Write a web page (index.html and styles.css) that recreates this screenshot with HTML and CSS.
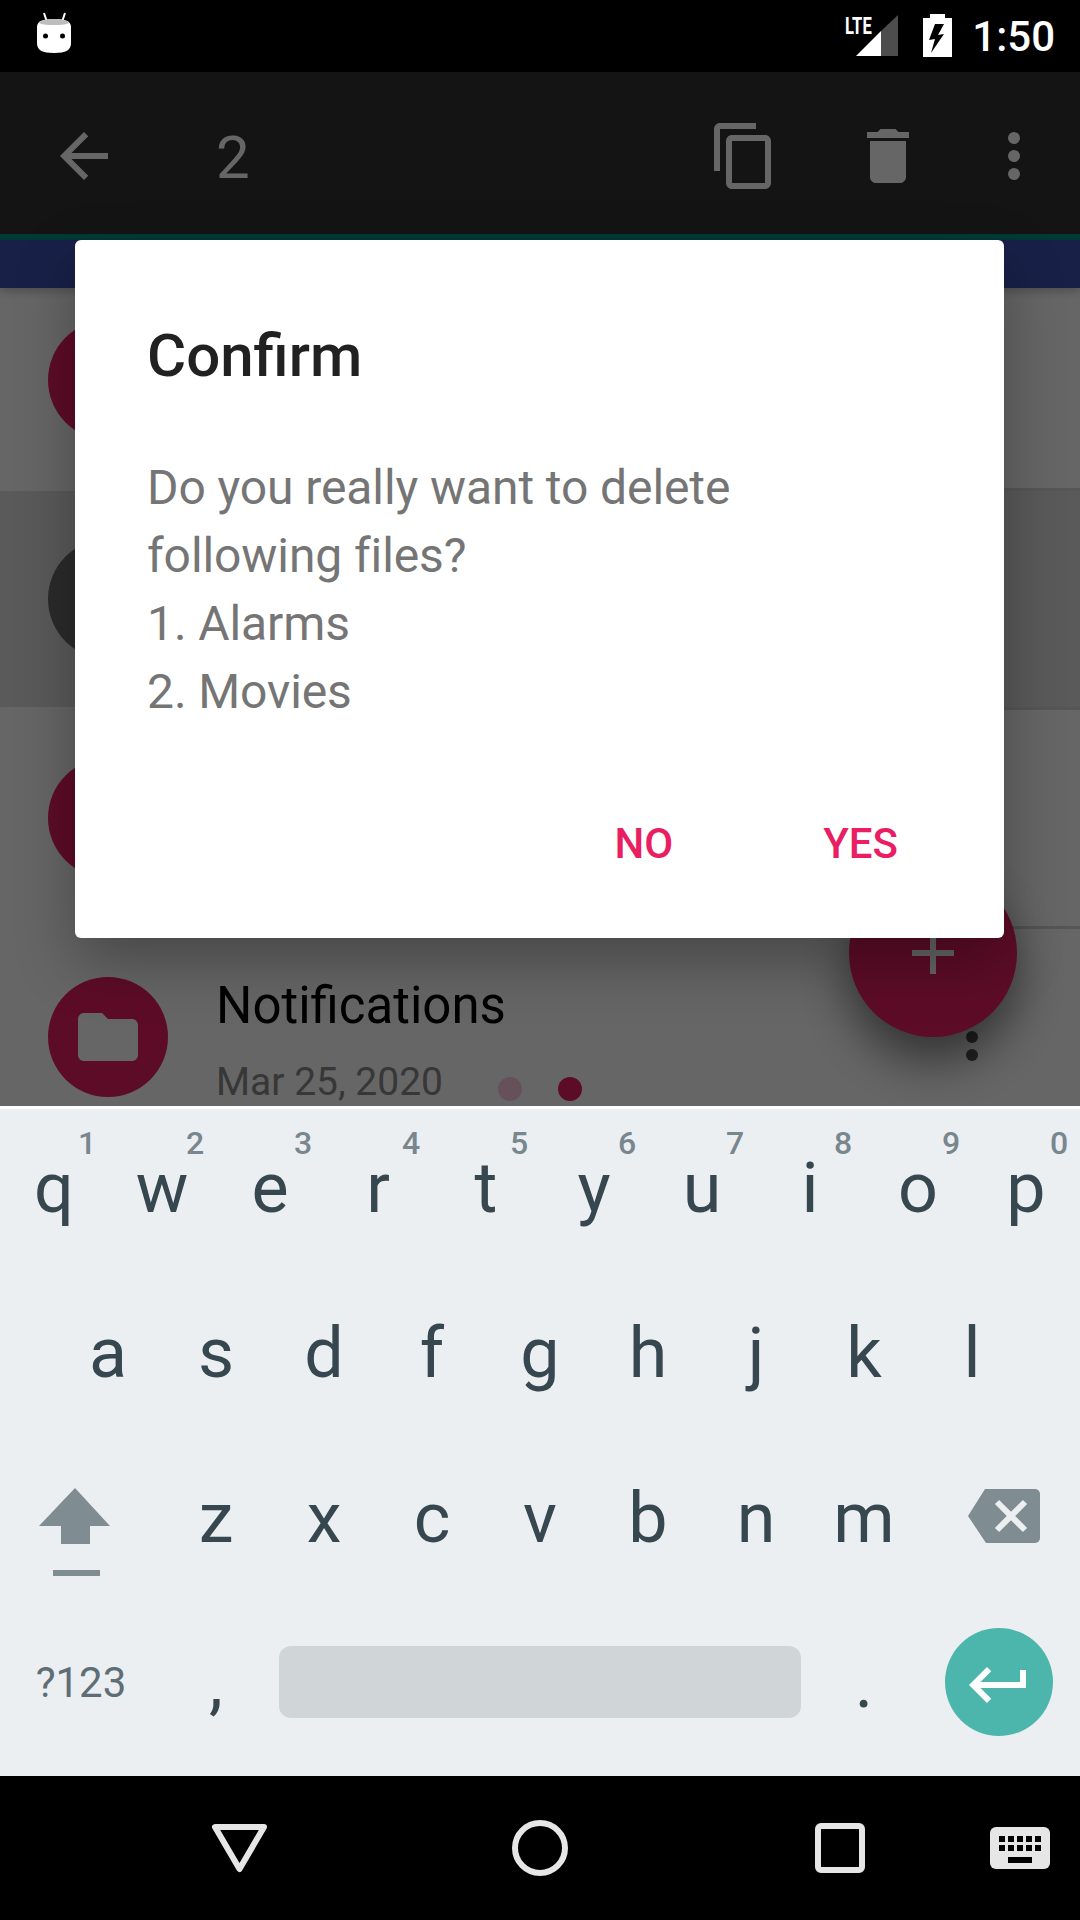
FILE: index.html
```html
<!DOCTYPE html>
<html lang="en">
<head>
    <meta charset="UTF-8">
    <meta name="viewport" content="width=device-width, initial-scale=1.0">
    <title>Confirm delete</title>
    <link rel="stylesheet" href="styles.css">
</head>

<body>
<div class="screen">

    <!-- Status bar -->
    <div class="status-bar">
        <svg class="status-robot" width="48" height="48" viewBox="0 0 48 48">
            <path d="M14 5l3 9M35 5l-3 9" stroke="#fff" stroke-width="2" fill="none"/>
            <path d="M7 19c0-6 6-8 17-8s17 2 17 8v16c0 7-5 10-17 10S7 42 7 35z" fill="#fff"/>
            <path d="M9 15c2-3 7-4 15-4s13 1 15 4c-4 2-9 2-15 2s-11 0-15-2z" fill="#bdbdbd"/>
            <circle cx="15.500" cy="28" r="2.500" fill="#000"/>
            <circle cx="32.500" cy="28" r="2.500" fill="#000"/>
        </svg>
        <div class="status-signal">
            <span class="status-lte">LTE</span>
            <svg class="status-bars" width="42" height="42" viewBox="0 0 42 42">
                <path d="M0 41L25 16v25z" fill="#fff"/>
                <path d="M25 16L42 0v41H25z" fill="#4d4d4d"/>
            </svg>
        </div>
        <svg class="status-battery" width="29" height="43" viewBox="0 0 29 43">
            <path d="M7 0h15v4h7v39H0V4h7z" fill="#fff"/>
            <path d="M21 10h-9L6 26l6-1-4 14 13-19-6 1z" fill="#000"/>
        </svg>
        <span class="status-time">1:50</span>
    </div>

    <div class="app">
        <!-- Action bar -->
        <div class="toolbar">
            <svg class="tool-back" width="72" height="72" viewBox="0 0 24 24"><path d="M20 11H7.830l5.590-5.590L12 4l-8 8 8 8 1.410-1.410L7.830 13H20v-2z"/></svg>
            <span class="tool-count">2</span>
            <svg class="tool-copy" width="72" height="72" viewBox="0 0 24 24"><path d="M16 1H4c-1.100 0-2 .9-2 2v14h2V3h12V1zm3 4H8c-1.100 0-2 .9-2 2v14c0 1.100.9 2 2 2h11c1.100 0 2-.9 2-2V7c0-1.100-.9-2-2-2zm0 16H8V7h11v14z"/></svg>
            <svg class="tool-delete" width="72" height="72" viewBox="0 0 24 24"><path d="M6 19c0 1.100.9 2 2 2h8c1.100 0 2-.9 2-2V7H6v12zM19 4h-3.500l-1-1h-5l-1 1H5v2h14V4z"/></svg>
            <svg class="tool-more" width="72" height="72" viewBox="0 0 24 24"><circle cx="12" cy="6" r="2"/><circle cx="12" cy="12" r="2"/><circle cx="12" cy="18" r="2"/></svg>
        </div>
        <div class="banner"></div>

        <!-- File list -->
        <div class="file-list">
            <div class="file-row"><div class="file-icon"></div></div>
            <div class="file-row selected"><div class="file-icon"></div></div>
            <div class="file-row"><div class="file-icon"></div></div>
            <div class="file-row">
                <div class="file-icon">
                    <svg width="72" height="72" viewBox="0 0 24 24"><path d="M10 4H4c-1.100 0-1.990.9-1.990 2L2 18c0 1.100.9 2 2 2h16c1.100 0 2-.9 2-2V8c0-1.100-.9-2-2-2h-8l-2-2z"/></svg>
                </div>
                <div class="file-text">
                    <div class="file-name">Notifications</div>
                    <div class="file-meta">
                        <span class="file-date">Mar 25, 2020</span>
                        <span class="tag-dot faded"></span>
                        <span class="tag-dot"></span>
                    </div>
                </div>
                <svg class="file-menu" width="72" height="72" viewBox="0 0 24 24"><circle cx="12" cy="6" r="2"/><circle cx="12" cy="12" r="2"/><circle cx="12" cy="18" r="2"/></svg>
            </div>
        </div>

        <div class="fab">
            <svg width="72" height="72" viewBox="0 0 24 24"><path d="M19 13h-6v6h-2v-6H5v-2h6V5h2v6h6v2z"/></svg>
        </div>

        <div class="scrim"></div>

        <!-- Confirm dialog -->
        <div class="dialog">
            <h2 class="dialog-title">Confirm</h2>
            <p class="dialog-body">Do you really want to delete<br>following files?<br>1. Alarms<br>2. Movies</p>
            <div class="dialog-actions">
                <span class="dialog-btn">NO</span>
                <span class="dialog-btn">YES</span>
            </div>
        </div>
    </div>

    <!-- Keyboard -->
    <div class="keyboard">
        <div class="kb-row">
            <div class="key">q<span class="key-hint">1</span></div>
            <div class="key">w<span class="key-hint">2</span></div>
            <div class="key">e<span class="key-hint">3</span></div>
            <div class="key">r<span class="key-hint">4</span></div>
            <div class="key">t<span class="key-hint">5</span></div>
            <div class="key">y<span class="key-hint">6</span></div>
            <div class="key">u<span class="key-hint">7</span></div>
            <div class="key">i<span class="key-hint">8</span></div>
            <div class="key">o<span class="key-hint">9</span></div>
            <div class="key">p<span class="key-hint">0</span></div>
        </div>
        <div class="kb-row kb-row-home">
            <div class="key">a</div>
            <div class="key">s</div>
            <div class="key">d</div>
            <div class="key">f</div>
            <div class="key">g</div>
            <div class="key">h</div>
            <div class="key">j</div>
            <div class="key">k</div>
            <div class="key">l</div>
        </div>
        <div class="kb-row">
            <div class="key key-wide key-shift">
                <svg width="72" height="88" viewBox="0 0 72 88">
                    <path d="M36 0l35 38H51v18H22V38H0z" fill="#7f8c91"/>
                    <rect x="14" y="82" width="47" height="6" fill="#7f8c91"/>
                </svg>
            </div>
            <div class="key">z</div>
            <div class="key">x</div>
            <div class="key">c</div>
            <div class="key">v</div>
            <div class="key">b</div>
            <div class="key">n</div>
            <div class="key">m</div>
            <div class="key key-wide key-delete">
                <svg width="72" height="54" viewBox="0 0 72 54">
                    <path d="M17 0h50a5 5 0 0 1 5 5v44a5 5 0 0 1-5 5H18L0 27z" fill="#7f8c91"/>
                    <path d="M29 13l28 28M57 13L29 41" stroke="#eceff1" stroke-width="6" fill="none"/>
                </svg>
            </div>
        </div>
        <div class="kb-row">
            <div class="key key-wide key-symbols">?123</div>
            <div class="key">,</div>
            <div class="key-space"><div class="space-bar"></div></div>
            <div class="key">.</div>
            <div class="key key-wide">
                <div class="enter-btn">
                    <svg width="72" height="72" viewBox="0 0 24 24"><path d="M19 7v4H5.830l3.580-3.590L8 6l-6 6 6 6 1.410-1.410L5.830 13H21V7z" fill="#fff"/></svg>
                </div>
            </div>
        </div>
    </div>

    <!-- Navigation bar -->
    <div class="nav-bar">
        <svg width="60" height="60" viewBox="0 0 60 60"><path d="M5 9h49L29.500 51z" fill="none" stroke="#e6e6e6" stroke-width="6" stroke-linejoin="round"/></svg>
        <svg width="60" height="60" viewBox="0 0 60 60"><circle cx="30" cy="30" r="25" fill="none" stroke="#e6e6e6" stroke-width="6"/></svg>
        <svg width="60" height="60" viewBox="0 0 60 60"><rect x="8" y="8" width="44" height="44" rx="3" fill="none" stroke="#e6e6e6" stroke-width="6"/></svg>
        <svg class="nav-keyboard" width="60" height="60" viewBox="0 0 60 60">
            <rect x="0" y="9" width="60" height="42" rx="6" fill="#e6e6e6"/>
            <path d="M9 18h6v6H9zM18 18h6v6h-6zM27 18h6v6h-6zM36 18h6v6h-6zM45 18h6v6h-6zM9 27h6v6H9zM18 27h6v6h-6zM27 27h6v6h-6zM36 27h6v6h-6zM45 27h6v6h-6zM18 39h24v6H18z" fill="#000"/>
        </svg>
    </div>
</div>
</body>
</html>
```

FILE: styles.css
```css
body {
    margin: 0;
    font-family: Roboto, "Noto Sans", sans-serif;
    background: #000;
}

.screen {
    width: 1080px;
    height: 1920px;
    display: flex;
    flex-direction: column;
    overflow: hidden;
}

/* Status bar */
.status-bar {
    height: 72px;
    flex: none;
    background: #000;
    display: flex;
    align-items: center;
    color: #fff;
}

.status-robot {
    margin-left: 30px;
    margin-top: -8px;
}

.status-signal {
    position: relative;
    margin-left: auto;
    width: 42px;
    height: 42px;
    margin-top: -1px;
}

.status-lte {
    position: absolute;
    left: -11px;
    top: 1px;
    font-size: 23px;
    line-height: 21px;
    font-weight: 700;
    transform: scaleX(0.72);
    transform-origin: left center;
}

.status-battery {
    margin-left: 25px;
    margin-top: -1px;
}

.status-time {
    margin-left: 20px;
    margin-right: 25px;
    font-size: 42px;
    font-weight: 500;
}

/* App behind the dialog */
.app {
    position: relative;
    height: 1034px;
    flex: none;
    overflow: hidden;
    background: #fff;
}

.toolbar {
    position: relative;
    z-index: 2;
    height: 114px;
    padding: 48px 30px 0 48px;
    display: flex;
    align-items: flex-start;
    background: #333;
    border-bottom: 6px solid #009688;
}

.toolbar svg {
    fill: #fff;
    flex: none;
}

.tool-count {
    margin-left: 96px;
    margin-top: 2px;
    font-size: 60px;
    line-height: 72px;
    color: #fff;
}

.tool-copy {
    margin-left: auto;
}

.tool-delete {
    margin-left: 72px;
}

.tool-more {
    margin-left: 54px;
}

.banner {
    position: relative;
    z-index: 2;
    height: 48px;
    background: #3f51b5;
    box-shadow: 0 3px 9px rgba(0, 0, 0, 0.25);
}

.file-list {
    margin-top: -16px;
}

.file-row {
    position: relative;
    height: 216px;
    margin-bottom: 3px;
    display: flex;
    align-items: center;
    padding: 0 72px 0 48px;
    background: #fff;
}

/* divider starts at the text column, not under the icon */
.file-row::after {
    content: "";
    position: absolute;
    left: 217px;
    right: 0;
    top: 100%;
    height: 3px;
    background: #d6d6d6;
}

.file-row.selected {
    background: #e0e0e0;
}

.file-row.selected .file-icon {
    background: #6c6c6c;
}

.file-icon {
    width: 120px;
    height: 120px;
    flex: none;
    border-radius: 50%;
    background: #e91e63;
    display: flex;
    align-items: center;
    justify-content: center;
}

.file-icon svg {
    fill: #fff;
}

.file-text {
    margin-left: 48px;
    padding-top: 7px;
}

.file-name {
    font-size: 51px;
    line-height: 60px;
    color: #000;
}

.file-meta {
    margin-top: 23px;
    display: flex;
    align-items: center;
}

.file-date {
    font-size: 39px;
    line-height: 46px;
    color: #8a8a8a;
}

.tag-dot {
    width: 24px;
    height: 24px;
    margin-left: 36px;
    margin-top: 13px;
    border-radius: 50%;
    background: #e91e63;
}

.tag-dot.faded {
    margin-left: 55px;
    background: #ffc8e1;
}

.file-menu {
    margin-left: auto;
    fill: #555;
}

.fab {
    position: absolute;
    right: 63px;
    bottom: 69px;
    width: 168px;
    height: 168px;
    border-radius: 50%;
    background: #e91e63;
    box-shadow: 0 24px 48px rgba(0, 0, 0, 0.5);
    display: flex;
    align-items: center;
    justify-content: center;
}

.fab svg {
    fill: #fff;
}

.scrim {
    position: absolute;
    inset: 0;
    z-index: 3;
    background: rgba(0, 0, 0, 0.6);
}

/* Dialog */
.dialog {
    position: absolute;
    z-index: 4;
    left: 75px;
    top: 168px;
    width: 929px;
    height: 698px;
    box-sizing: border-box;
    padding: 84px 106px 0 72px;
    background: #fff;
    border-radius: 6px;
    box-shadow: 0 24px 60px rgba(0, 0, 0, 0.3);
}

.dialog-title {
    margin: 0;
    font-size: 60px;
    line-height: 64px;
    font-weight: 500;
    color: #212121;
}

.dialog-body {
    margin: 66px 0 0;
    font-size: 48px;
    line-height: 68px;
    letter-spacing: -0.09px;
    color: #757575;
}

.dialog-actions {
    margin-top: 93px;
    display: flex;
    justify-content: flex-end;
    gap: 150px;
}

.dialog-btn {
    font-size: 42px;
    line-height: 50px;
    font-weight: 500;
    color: #e91e63;
}

/* Keyboard */
.keyboard {
    height: 670px;
    flex: none;
    box-sizing: border-box;
    border-top: 3px solid #fff;
    background: #eceff1;
}

.kb-row {
    height: 165px;
    box-sizing: border-box;
    padding-bottom: 8px;
    display: flex;
    align-items: center;
}

.kb-row-home {
    padding-left: 54px;
}

.key {
    position: relative;
    width: 108px;
    height: 157px;
    flex: none;
    display: flex;
    align-items: center;
    justify-content: center;
    font-size: 70px;
    color: #37474f;
}

.key-hint {
    position: absolute;
    left: 67px;
    top: 15px;
    width: 40px;
    text-align: center;
    font-size: 32px;
    line-height: 38px;
    font-weight: 500;
    color: #78868e;
}

.key-wide {
    width: 162px;
}

.key-shift {
    justify-content: flex-start;
    padding-left: 39px;
    box-sizing: border-box;
}

.key-shift svg {
    margin-top: 28px;
}

.key-delete {
    justify-content: flex-start;
    padding-left: 50px;
    box-sizing: border-box;
}

.key-delete svg {
    margin-top: -3px;
}

.key-symbols {
    font-size: 42px;
    color: #5e6e76;
}

.key-space {
    width: 540px;
    flex: none;
    padding: 0 9px 2px;
    box-sizing: border-box;
}

.space-bar {
    height: 72px;
    border-radius: 12px;
    background: #d0d5d8;
}

.enter-btn {
    width: 108px;
    height: 108px;
    margin-bottom: 2px;
    border-radius: 50%;
    background: #4db6ac;
    display: flex;
    align-items: center;
    justify-content: center;
}

.enter-btn svg {
    margin-top: 6px;
}

/* Navigation bar */
.nav-bar {
    height: 144px;
    flex: 1;
    background: #000;
    display: flex;
    align-items: center;
    gap: 240px;
    padding-left: 210px;
}

.nav-bar .nav-keyboard {
    margin-left: -120px;
}
```
